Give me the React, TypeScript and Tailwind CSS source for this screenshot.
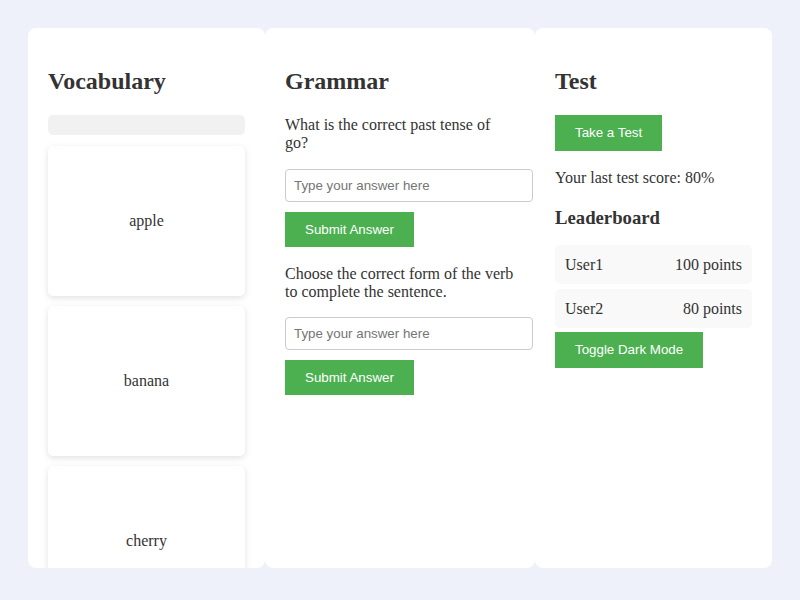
const serif = { fontFamily: '"Liberation Serif", "Times New Roman", serif' };

const words = ['apple', 'banana', 'cherry'];

const questions = [
  'What is the correct past tense of go?',
  'Choose the correct form of the verb to complete the sentence.',
];

const leaders = [
  { name: 'User1', points: 100 },
  { name: 'User2', points: 80 },
];

const btn =
  'bg-[#4caf50] px-5 py-[10px] text-[13.33px] leading-[15px] text-white font-["Liberation_Sans",Arial,sans-serif]';

export default function App() {
  return (
    <div
      className="flex h-[600px] w-[800px] bg-[#eef1f9] p-[28px] text-[16px] text-[#333]"
      style={serif}
    >
      {/* Vocabulary */}
      <section className="flex h-[540px] w-[237px] shrink-0 flex-col overflow-hidden rounded-lg bg-white px-5 pt-5">
        <h2 className="mt-5 shrink-0 text-[24px] font-bold leading-[27px]">Vocabulary</h2>
        <div className="mt-5 h-5 w-[197px] shrink-0 rounded-[5px] bg-[#f1f1f1]" />
        <div className="flex shrink-0 flex-col gap-[10px] pt-[11px]">
          {words.map((w) => (
            <div
              key={w}
              className="flex h-[150px] shrink-0 items-center justify-center rounded-[5px] bg-white shadow-[0_2px_6px_rgba(0,0,0,0.12)]"
            >
              {w}
            </div>
          ))}
        </div>
      </section>

      {/* Grammar */}
      <section className="h-[540px] w-[270px] shrink-0 rounded-lg bg-white px-5 pt-5">
        <h2 className="mt-5 text-[24px] font-bold leading-[27px]">Grammar</h2>
        {questions.map((q, i) => (
          <div key={q}>
            <p className={(i === 0 ? 'mt-[21px]' : 'mt-[18px]') + ' w-[230px] leading-[18px]'}>{q}</p>
            <input
              className={
                (i === 0 ? 'mt-[17px]' : 'mt-[16px]') +
                ' block h-[33px] w-[248px] rounded-[4px] border border-[#ccc] px-2 font-["Liberation_Sans",Arial,sans-serif] text-[13.33px] outline-none placeholder:text-[#757575]'
              }
              placeholder="Type your answer here"
            />
            <button className={'mt-[10px] block ' + btn}>Submit Answer</button>
          </div>
        ))}
      </section>

      {/* Test */}
      <section className="h-[540px] w-[237px] shrink-0 rounded-lg bg-white px-5 pt-5">
        <h2 className="mt-5 text-[24px] font-bold leading-[27px]">Test</h2>
        <button className={'mt-5 block !leading-[16px] ' + btn}>Take a Test</button>
        <p className="mt-[18px] leading-[18px]">Your last test score: 80%</p>
        <h3 className="mt-[20px] text-[18.72px] font-bold leading-[22px]">Leaderboard</h3>
        <div className="mt-[16px] flex flex-col gap-[5px]">
          {leaders.map((l) => (
            <div
              key={l.name}
              className="flex items-center justify-between rounded-[5px] bg-[#f9f9f9] px-[10px] py-[10px] leading-[19px]"
            >
              <span>{l.name}</span>
              <span>{l.points} points</span>
            </div>
          ))}
        </div>
        <button className={'mt-[4px] block !leading-[16px] ' + btn}>Toggle Dark Mode</button>
      </section>
    </div>
  );
}
